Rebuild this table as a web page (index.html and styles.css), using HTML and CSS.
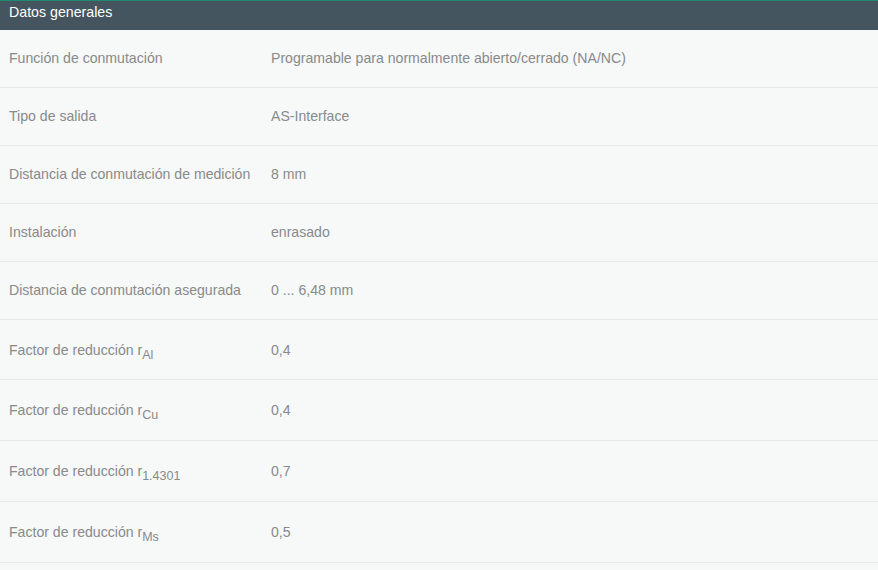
FILE: index.html
```html
<!DOCTYPE html>
<html lang="es">
<head>
<meta charset="utf-8">
<title>Datos generales</title>
<link rel="stylesheet" href="styles.css">
</head>
<body>
<section class="panel">
  <h2 class="panel-title">Datos generales</h2>
  <div class="rows">
    <div class="row"><div class="label">Función de conmutación</div><div class="value">Programable para normalmente abierto/cerrado (NA/NC)</div></div>
    <div class="row"><div class="label">Tipo de salida</div><div class="value">AS-Interface</div></div>
    <div class="row"><div class="label">Distancia de conmutación de medición</div><div class="value">8 mm</div></div>
    <div class="row"><div class="label">Instalación</div><div class="value">enrasado</div></div>
    <div class="row"><div class="label">Distancia de conmutación asegurada</div><div class="value">0 ... 6,48 mm</div></div>
    <div class="row sub-row first-sub"><div class="label">Factor de reducción r<sub>Al</sub></div><div class="value">0,4</div></div>
    <div class="row sub-row"><div class="label">Factor de reducción r<sub>Cu</sub></div><div class="value">0,4</div></div>
    <div class="row sub-row"><div class="label">Factor de reducción r<sub>1.4301</sub></div><div class="value">0,7</div></div>
    <div class="row sub-row"><div class="label">Factor de reducción r<sub>Ms</sub></div><div class="value">0,5</div></div>
  </div>
</section>
</body>
</html>
```
FILE: styles.css
```css
html, body {
  margin: 0;
  padding: 0;
  background: #f7f8f8;
}
body {
  font-family: "Liberation Sans", Arial, sans-serif;
  font-size: 14.1px;
  color: #888a8b;
}
.panel-title {
  margin: 0;
  height: 28px;
  box-sizing: content-box;
  border-top: 1px solid #1f8a6f;
  background: #44555f;
  color: #ffffff;
  font-size: 14.2px;
  font-weight: normal;
  line-height: 20px;
  padding: 1px 9px 0;
}
.row {
  display: grid;
  grid-template-columns: 262px 1fr;
  align-items: center;
  border-bottom: 1px solid #e6e9ea;
  padding: 20px 0 21px 9px;
  line-height: 16px;
  height: 16px;
  box-sizing: content-box;
}
.label, .value {
  line-height: 16px;
}
sub {
  font-size: 12.5px;
  line-height: 0;
  vertical-align: -4px;
}
.sub-row {
  height: 18px;
  padding: 21px 0 21px 9px;
}
.first-sub {
  height: 17px;
}
```
